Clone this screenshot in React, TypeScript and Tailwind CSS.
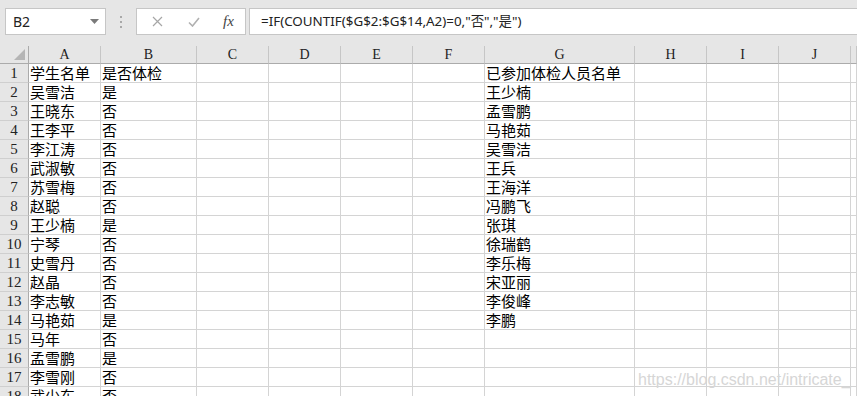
import React from 'react';

const columns = ['A', 'B', 'C', 'D', 'E', 'F', 'G', 'H', 'I', 'J', ''];

const colA = [
  '学生名单', '吴雪洁', '王晓东', '王李平', '李江涛', '武淑敏', '苏雪梅', '赵聪', '王少楠',
  '宁琴', '史雪丹', '赵晶', '李志敏', '马艳茹', '马年', '孟雪鹏', '李雪刚', '武少东',
];

const colB = [
  '是否体检', '是', '否', '否', '否', '否', '否', '否', '是',
  '否', '否', '否', '否', '是', '否', '是', '否', '否',
];

const colG = [
  '已参加体检人员名单', '王少楠', '孟雪鹏', '马艳茹', '吴雪洁', '王兵', '王海洋', '冯鹏飞',
  '张琪', '徐瑞鹤', '李乐梅', '宋亚丽', '李俊峰', '李鹏',
];

const gridCols = 'grid grid-cols-[29px_72px_96px_72px_72px_72px_72px_150px_72px_72px_72px_1fr]';
const cellFont = { fontFamily: '"Noto Sans CJK SC", sans-serif' };

const FormulaBar: React.FC = () => (
  <div className="flex h-[46px] items-start bg-[#e6e6e6] pt-[8px]">
    {/* Name box */}
    <div className="ml-[5px] flex h-[27px] w-[101px] items-center justify-between border border-[#c6c6c6] bg-white pl-[7px] pr-[6px]">
      <span className="text-[14px] text-[#222]" style={{ fontFamily: '"Noto Sans", sans-serif' }}>B2</span>
      <svg width="9" height="5" viewBox="0 0 9 5"><path d="M0 0h9L4.5 5z" fill="#7a7a7a" /></svg>
    </div>
    {/* Splitter dots */}
    <div className="ml-[14px] flex h-[27px] flex-col items-center justify-center gap-[3px]">
      <span className="h-[2px] w-[2px] bg-[#a8a8a8]" />
      <span className="h-[2px] w-[2px] bg-[#a8a8a8]" />
      <span className="h-[2px] w-[2px] bg-[#a8a8a8]" />
    </div>
    {/* Cancel / enter / fx */}
    <div className="ml-[14px] flex h-[27px] w-[110px] items-center border border-[#c6c6c6] bg-white">
      <svg className="ml-[15px]" width="11" height="11" viewBox="0 0 11 11">
        <path d="M1 1l9 9M10 1l-9 9" stroke="#a6a6a6" strokeWidth="1.2" />
      </svg>
      <svg className="ml-[25px]" width="12" height="10" viewBox="0 0 12 10">
        <path d="M1 5.5l3.5 3.5L11 1" stroke="#b0b0b0" strokeWidth="1.6" fill="none" />
      </svg>
      <span
        className="ml-[23px] text-[15px] italic text-[#444]"
        style={{ fontFamily: '"Liberation Serif", serif' }}
      >
        fx
      </span>
    </div>
    {/* Formula input */}
    <div className="ml-[3px] flex h-[27px] flex-1 items-center border border-r-0 border-[#c6c6c6] bg-white pl-[11px]">
      <span
        className="text-[13.4px] text-[#222]"
        style={{ fontFamily: '"Noto Sans", "Noto Sans CJK SC", sans-serif' }}
      >
        =IF(COUNTIF($G$2:$G$14,A2)=0,"否","是")
      </span>
    </div>
  </div>
);

const HeaderRow: React.FC = () => (
  <div className={`${gridCols} h-[18px] bg-[#e6e6e6]`}>
    <div className="relative border-b border-r border-[#ababab]">
      <svg className="absolute bottom-[3px] right-[3px]" width="11" height="11" viewBox="0 0 11 11">
        <path d="M11 0v11H0z" fill="#b5b5b5" />
      </svg>
    </div>
    {columns.map((c, i) => (
      <div
        key={i}
        className="flex items-center justify-center border-b border-r border-b-[#ababab] border-r-[#c6c6c6] text-[14px] leading-none text-[#222]"
        style={{ fontFamily: '"Liberation Serif", serif' }}
      >
        {c}
      </div>
    ))}
  </div>
);

const Cell: React.FC<{ text?: string }> = ({ text }) => (
  <div
    className="flex items-center overflow-visible whitespace-nowrap border-b border-r border-[#d4d4d4] pl-[1px] text-[15px] leading-[18px] text-black"
    style={cellFont}
  >
    {text}
  </div>
);

const App: React.FC = () => {
  const rows = Array.from({ length: 18 }, (_, i) => i);

  return (
    <div className="relative h-[396px] w-[857px] overflow-hidden bg-white">
      <FormulaBar />
      <HeaderRow />
      {rows.map((r) => (
        <div key={r} className={`${gridCols} h-[19px]`}>
          <div
            className="flex items-center justify-center border-b border-r border-b-[#cfcfcf] border-r-[#ababab] bg-[#e6e6e6] text-[15px] leading-[18px] text-[#222]"
            style={{ fontFamily: '"Liberation Serif", serif' }}
          >
            {r + 1}
          </div>
          <Cell text={colA[r]} />
          <Cell text={colB[r]} />
          <Cell />
          <Cell />
          <Cell />
          <Cell />
          <Cell text={colG[r]} />
          <Cell />
          <Cell />
          <Cell />
          <Cell />
        </div>
      ))}

      {/* Watermark */}
      <div
        className="pointer-events-none absolute left-[638px] top-[368px] text-[16px] text-[#d6d6d6]"
        style={{ fontFamily: '"Liberation Sans", sans-serif' }}
      >
        https://blog.csdn.net/intricate_
      </div>
    </div>
  );
};

export default App;
